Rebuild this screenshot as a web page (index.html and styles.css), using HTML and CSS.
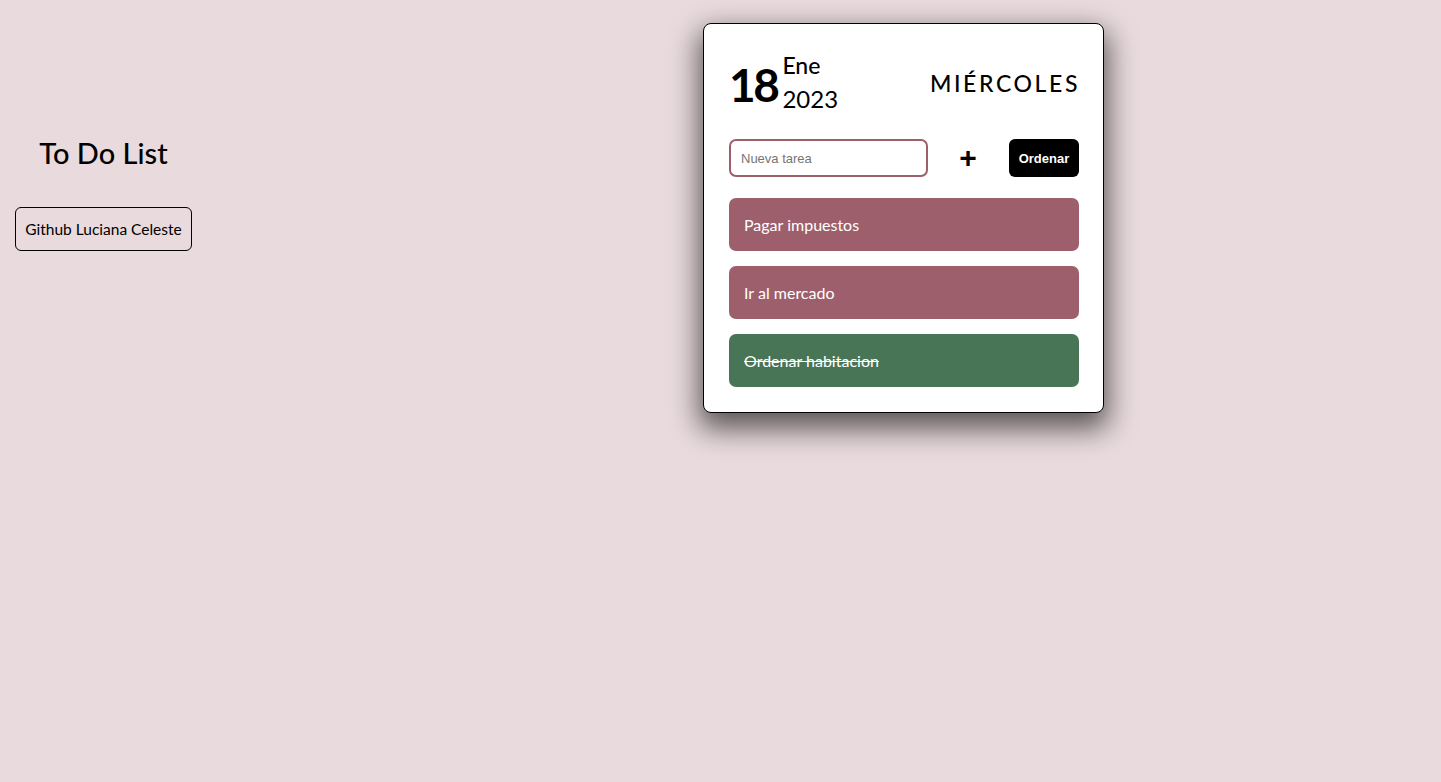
FILE: index.html
```html
<!DOCTYPE html>
<html lang="es">
<head>
<meta charset="utf-8">
<title>To Do List</title>
<link rel="stylesheet" href="styles.css">
</head>
<body>
<div class="page">
  <aside class="sidebar">
    <h1 class="title">To Do List</h1>
    <a class="github" href="#">Github Luciana Celeste</a>
  </aside>
  <main class="main">
    <section class="card">
      <header class="date">
        <div class="date-left">
          <span class="day">18</span>
          <div class="month-year">
            <span class="month">Ene</span>
            <span class="year">2023</span>
          </div>
        </div>
        <div class="weekday">MIÉRCOLES</div>
      </header>
      <form class="new-task">
        <input class="task-input" type="text" placeholder="Nueva tarea">
        <button type="button" class="add-btn">+</button>
        <button type="button" class="order-btn">Ordenar</button>
      </form>
      <ul class="tasks">
        <li class="task">Pagar impuestos</li>
        <li class="task">Ir al mercado</li>
        <li class="task done">Ordenar habitacion</li>
      </ul>
    </section>
  </main>
</div>
</body>
</html>
```
FILE: styles.css
```css
* { box-sizing: border-box; }
html, body { margin: 0; padding: 0; }
body {
  background: #e8dadd;
  font-family: "Lato", "Noto Sans", sans-serif;
  color: #000;
  min-height: 100vh;
}
.page {
  display: flex;
  align-items: flex-start;
  padding-top: 23px;
}
.sidebar {
  width: 177px;
  margin-left: 15px;
  display: flex;
  flex-direction: column;
  align-items: center;
  padding-top: 107px;
}
.title {
  margin: 0;
  font-size: 29px;
  font-weight: 500;
  line-height: 45px;
}
.github {
  margin-top: 32px;
  width: 177px;
  height: 44px;
  display: flex;
  align-items: center;
  justify-content: center;
  border: 1px solid #000;
  border-radius: 6px;
  color: #000;
  text-decoration: none;
  font-size: 15.5px;
  font-weight: 400;
}
.main {
  margin-left: 511px;
}
.card {
  width: 401px;
  background: #fff;
  border: 1px solid #000;
  border-radius: 8px;
  padding: 24px 24px 25px 25px;
  box-shadow: 0 12px 28px 4px rgba(0, 0, 0, 0.6);
}
.date {
  display: flex;
  justify-content: space-between;
  align-items: center;
  height: 66px;
}
.date-left {
  display: flex;
  align-items: center;
  gap: 5px;
}
.day {
  font-size: 46px;
  font-weight: 700;
  letter-spacing: -2.5px;
  line-height: 48px;
  padding-top: 8px;
  padding-right: 0;
}
.month-year {
  display: flex;
  flex-direction: column;
  padding-top: 3px;
}
.month {
  font-size: 23px;
  font-weight: 500;
  line-height: 31px;
}
.year {
  font-size: 24px;
  line-height: 35px;
}
.weekday {
  font-size: 23px;
  letter-spacing: 2.6px;
  font-weight: 500;
  margin-right: -1px;
  padding-top: 4px;
}
.new-task {
  display: flex;
  align-items: center;
  margin-top: 25px;
}
.task-input {
  width: 199px;
  height: 38px;
  border: 2px solid #9e5f6c;
  border-radius: 7px;
  padding: 0 10px;
  font-family: "Liberation Sans", Arial, sans-serif;
  font-size: 13px;
  outline: none;
}
.task-input::placeholder { color: #757575; }
.add-btn {
  margin-left: 30px;
  width: 20px;
  background: none;
  border: none;
  padding: 0;
  font-family: "Liberation Sans", Arial, sans-serif;
  font-size: 30px;
  font-weight: 700;
  line-height: 30px;
  color: #000;
}
.order-btn {
  margin-left: auto;
  width: 70px;
  height: 38px;
  background: #000;
  color: #fff;
  border: none;
  border-radius: 6px;
  font-family: "Liberation Sans", Arial, sans-serif;
  font-size: 13px;
  font-weight: 700;
  padding: 0;
}
.tasks {
  list-style: none;
  margin: 21px 0 0;
  padding: 0;
  display: flex;
  flex-direction: column;
  gap: 15px;
}
.task {
  height: 53px;
  background: #9e5f6c;
  border-radius: 7px;
  color: #fff;
  font-size: 16px;
  display: flex;
  align-items: center;
  padding: 0 15px;
}
.task.done {
  background: #497557;
  text-decoration: line-through;
}
```
